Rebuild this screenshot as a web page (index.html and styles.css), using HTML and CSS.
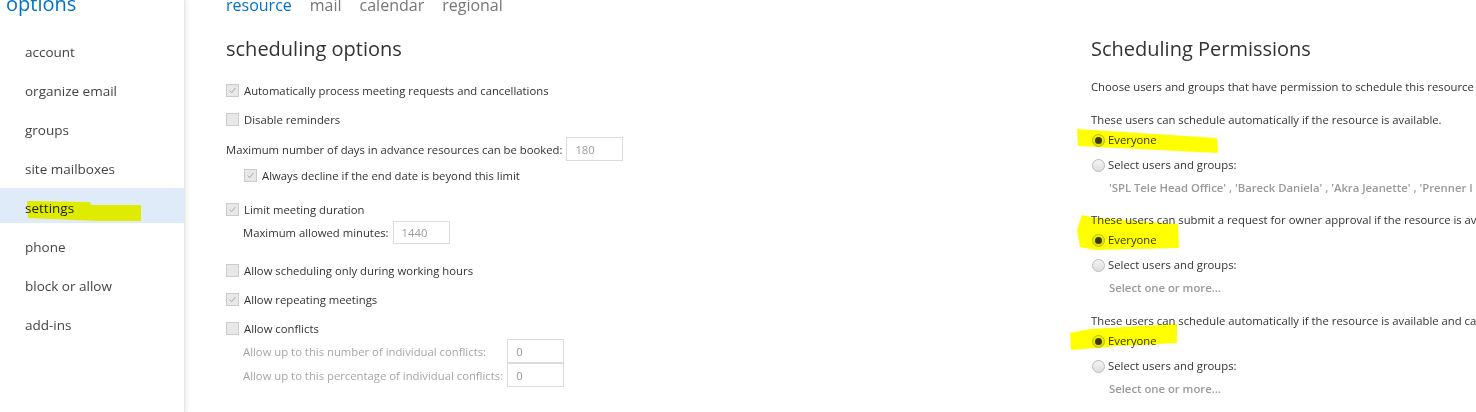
FILE: index.html
```html
<!DOCTYPE html>
<html lang="en">
<head>
<meta charset="utf-8">
<title>options - settings - resource</title>
<link rel="stylesheet" href="styles.css">
</head>
<body>
<div class="app">
  <aside class="sidebar">
    <h1 class="title">options</h1>
    <nav class="nav">
      <a class="nav-item">account</a>
      <a class="nav-item">organize email</a>
      <a class="nav-item">groups</a>
      <a class="nav-item">site mailboxes</a>
      <a class="nav-item active">settings</a>
      <a class="nav-item">phone</a>
      <a class="nav-item">block or allow</a>
      <a class="nav-item">add-ins</a>
    </nav>
  </aside>

  <main class="main">
    <div class="tabs">
      <span class="tab current">resource</span>
      <span class="tab">mail</span>
      <span class="tab">calendar</span>
      <span class="tab">regional</span>
    </div>

    <div class="columns">
      <section class="sched">
        <h2 class="heading">scheduling options</h2>

        <div class="row r-auto"><span class="cb checked"><svg viewBox="0 0 13 13"><polyline points="3,6.5 5.5,9 10,3.5"/></svg></span><span class="label">Automatically process meeting requests and cancellations</span></div>
        <div class="row r-disable"><span class="cb"></span><span class="label">Disable reminders</span></div>
        <div class="row field r-days"><span class="label">Maximum number of days in advance resources can be booked:</span><span class="input">180</span></div>
        <div class="row indent r-always"><span class="cb checked"><svg viewBox="0 0 13 13"><polyline points="3,6.5 5.5,9 10,3.5"/></svg></span><span class="label">Always decline if the end date is beyond this limit</span></div>
        <div class="row r-limit"><span class="cb checked"><svg viewBox="0 0 13 13"><polyline points="3,6.5 5.5,9 10,3.5"/></svg></span><span class="label">Limit meeting duration</span></div>
        <div class="row field sub r-minutes"><span class="label">Maximum allowed minutes:</span><span class="input">1440</span></div>
        <div class="row r-working"><span class="cb"></span><span class="label">Allow scheduling only during working hours</span></div>
        <div class="row r-repeat"><span class="cb checked"><svg viewBox="0 0 13 13"><polyline points="3,6.5 5.5,9 10,3.5"/></svg></span><span class="label">Allow repeating meetings</span></div>
        <div class="row r-conflicts"><span class="cb"></span><span class="label">Allow conflicts</span></div>
        <div class="conflict-grid">
          <span class="label muted">Allow up to this number of individual conflicts:</span><span class="input">0</span>
          <span class="label muted">Allow up to this percentage of individual conflicts:</span><span class="input">0</span>
        </div>
      </section>

      <section class="perms">
        <h2 class="heading">Scheduling Permissions</h2>
        <p class="intro">Choose users and groups that have permission to schedule this resource</p>

        <div class="group">
          <p class="desc">These users can schedule automatically if the resource is available.</p>
          <div class="radio-row"><span class="radio on"></span><span>Everyone</span></div>
          <div class="radio-row second"><span class="radio"></span><span>Select users and groups:</span></div>
          <p class="picked">'SPL Tele Head Office' , 'Bareck Daniela' , 'Akra Jeanette' , 'Prenner I</p>
        </div>

        <div class="group">
          <p class="desc">These users can submit a request for owner approval if the resource is available.</p>
          <div class="radio-row"><span class="radio on"></span><span>Everyone</span></div>
          <div class="radio-row second"><span class="radio"></span><span>Select users and groups:</span></div>
          <p class="picked">Select one or more...</p>
        </div>

        <div class="group last">
          <p class="desc">These users can schedule automatically if the resource is available and can submit a request for owner approval if the resource is unavailable.</p>
          <div class="radio-row"><span class="radio on"></span><span>Everyone</span></div>
          <div class="radio-row second"><span class="radio"></span><span>Select users and groups:</span></div>
          <p class="picked">Select one or more...</p>
        </div>
      </section>
    </div>
  </main>

  <svg class="marker" width="1476" height="412" viewBox="0 0 1476 412" aria-hidden="true">
    <polygon points="27,201 90,202 91,205 141,205 141,221 100,221 28,218"/>
    <polygon points="1077,129 1217,138 1218,153 1078,146"/>
    <polygon points="1082,215 1095,218 1178,224 1179,248 1095,250 1080,247 1077,230"/>
    <polygon points="1070,333 1090,329 1177,324 1177,343 1120,346 1071,350"/>
  </svg>
</div>
</body>
</html>
```

FILE: styles.css
```css
* { box-sizing: border-box; }

html, body {
  margin: 0;
  padding: 0;
  width: 1476px;
  height: 412px;
  overflow: hidden;
  background: #fff;
}

body {
  font-family: "Open Sans", "Noto Sans", sans-serif;
  color: #333;
}

.app {
  position: relative;
  display: flex;
  height: 412px;
}

/* ---------- sidebar ---------- */
.sidebar {
  width: 184px;
  flex: none;
  height: 100%;
  background: #fff;
  box-shadow: 1px 0 0 #e6e6e6, 3px 0 4px rgba(0, 0, 0, 0.07);
  position: relative;
  z-index: 1;
}

.title {
  margin: -8px 0 0 6px;
  font-size: 20px;
  line-height: 24px;
  font-weight: 400;
  color: #0072c6;
}

.nav {
  margin-top: 16px;
  display: flex;
  flex-direction: column;
  gap: 4px;
}

.nav-item {
  display: block;
  height: 35px;
  padding: 6px 0 0 25px;
  font-size: 13.5px;
  line-height: 29px;
  color: #444;
}

.nav-item.active {
  background: #dfebf8;
  color: #222;
}

/* ---------- main ---------- */
.main {
  flex: 1;
  min-width: 0;
  padding-left: 42px;
}

.tabs {
  margin-top: -5px;
  display: flex;
  gap: 18px;
  font-size: 16px;
  line-height: 20px;
  white-space: nowrap;
}

.tab { color: #777; }
.tab.current { color: #0072c6; }

.columns {
  display: flex;
}

.heading {
  margin: 20px 0 0;
  font-size: 20px;
  line-height: 28px;
  font-weight: 400;
  color: #333;
  white-space: nowrap;
}

.sched {
  width: 865px;
  flex: none;
  font-size: 11.3px;
}

.row {
  display: flex;
  align-items: center;
  height: 20px;
  white-space: nowrap;
}

.row .cb { margin-right: 5px; }

.r-auto { margin-top: 17px; }
.r-disable { margin-top: 9px; }
.r-days { margin-top: 8px; height: 24px; }
.r-always { margin-top: 4px; }
.r-limit { margin-top: 14px; }
.r-minutes { margin-top: 2px; height: 23px; }
.r-working { margin-top: 16px; }
.r-repeat { margin-top: 9px; }
.r-conflicts { margin-top: 9px; }

.indent { padding-left: 18px; }
.sub { padding-left: 17px; }

.field .input { margin-left: 4px; }

.label { color: #333; }
.label.muted { color: #a6a6a6; }

.cb {
  width: 13px;
  height: 13px;
  flex: none;
  border: 1px solid #cbcbcb;
  background: #e8e8e8;
  display: inline-block;
}

.cb svg {
  display: block;
  width: 11px;
  height: 11px;
}

.cb svg polyline {
  fill: none;
  stroke: #9c9c9c;
  stroke-width: 1;
}

.input {
  display: inline-flex;
  align-items: center;
  width: 57px;
  height: 100%;
  padding-left: 8px;
  border: 1px solid #dcdcdc;
  color: #9a9a9a;
  background: #fff;
}

.conflict-grid {
  margin-top: 1px;
  padding-left: 17px;
  display: grid;
  grid-template-columns: max-content 57px;
  grid-auto-rows: 24px;
  align-items: center;
  white-space: nowrap;
}

.conflict-grid .label { padding-right: 4px; }

.conflict-grid .input { height: 24px; }

/* ---------- permissions ---------- */
.perms {
  flex: none;
  white-space: nowrap;
  font-size: 11.3px;
  line-height: 20px;
  color: #333;
}

.perms p { margin: 0; }

.perms .intro { margin-top: 14px; }

.group { margin-top: 13px; }
.group + .group { margin-top: 12px; }
.group.last { margin-top: 13px; }

.radio-row {
  display: flex;
  align-items: center;
  height: 20px;
  gap: 3px;
  padding-left: 1px;
}

.radio-row.second { margin-top: 5px; }

.radio {
  width: 13px;
  height: 13px;
  border-radius: 50%;
  border: 1px solid #b9b9b9;
  background: linear-gradient(#f4f4f4, #dedede);
  display: inline-flex;
  align-items: center;
  justify-content: center;
  flex: none;
}

.radio.on::after {
  content: "";
  width: 7px;
  height: 7px;
  border-radius: 50%;
  background: #3a3a3a;
}

.perms .picked {
  margin-top: 3px;
  padding-left: 18px;
  font-weight: 600;
  color: #9a9a9a;
}

/* ---------- highlighter annotations ---------- */
.marker {
  position: absolute;
  left: 0;
  top: 0;
  pointer-events: none;
  mix-blend-mode: multiply;
  z-index: 5;
}

.marker polygon { fill: #ffff00; }
```
